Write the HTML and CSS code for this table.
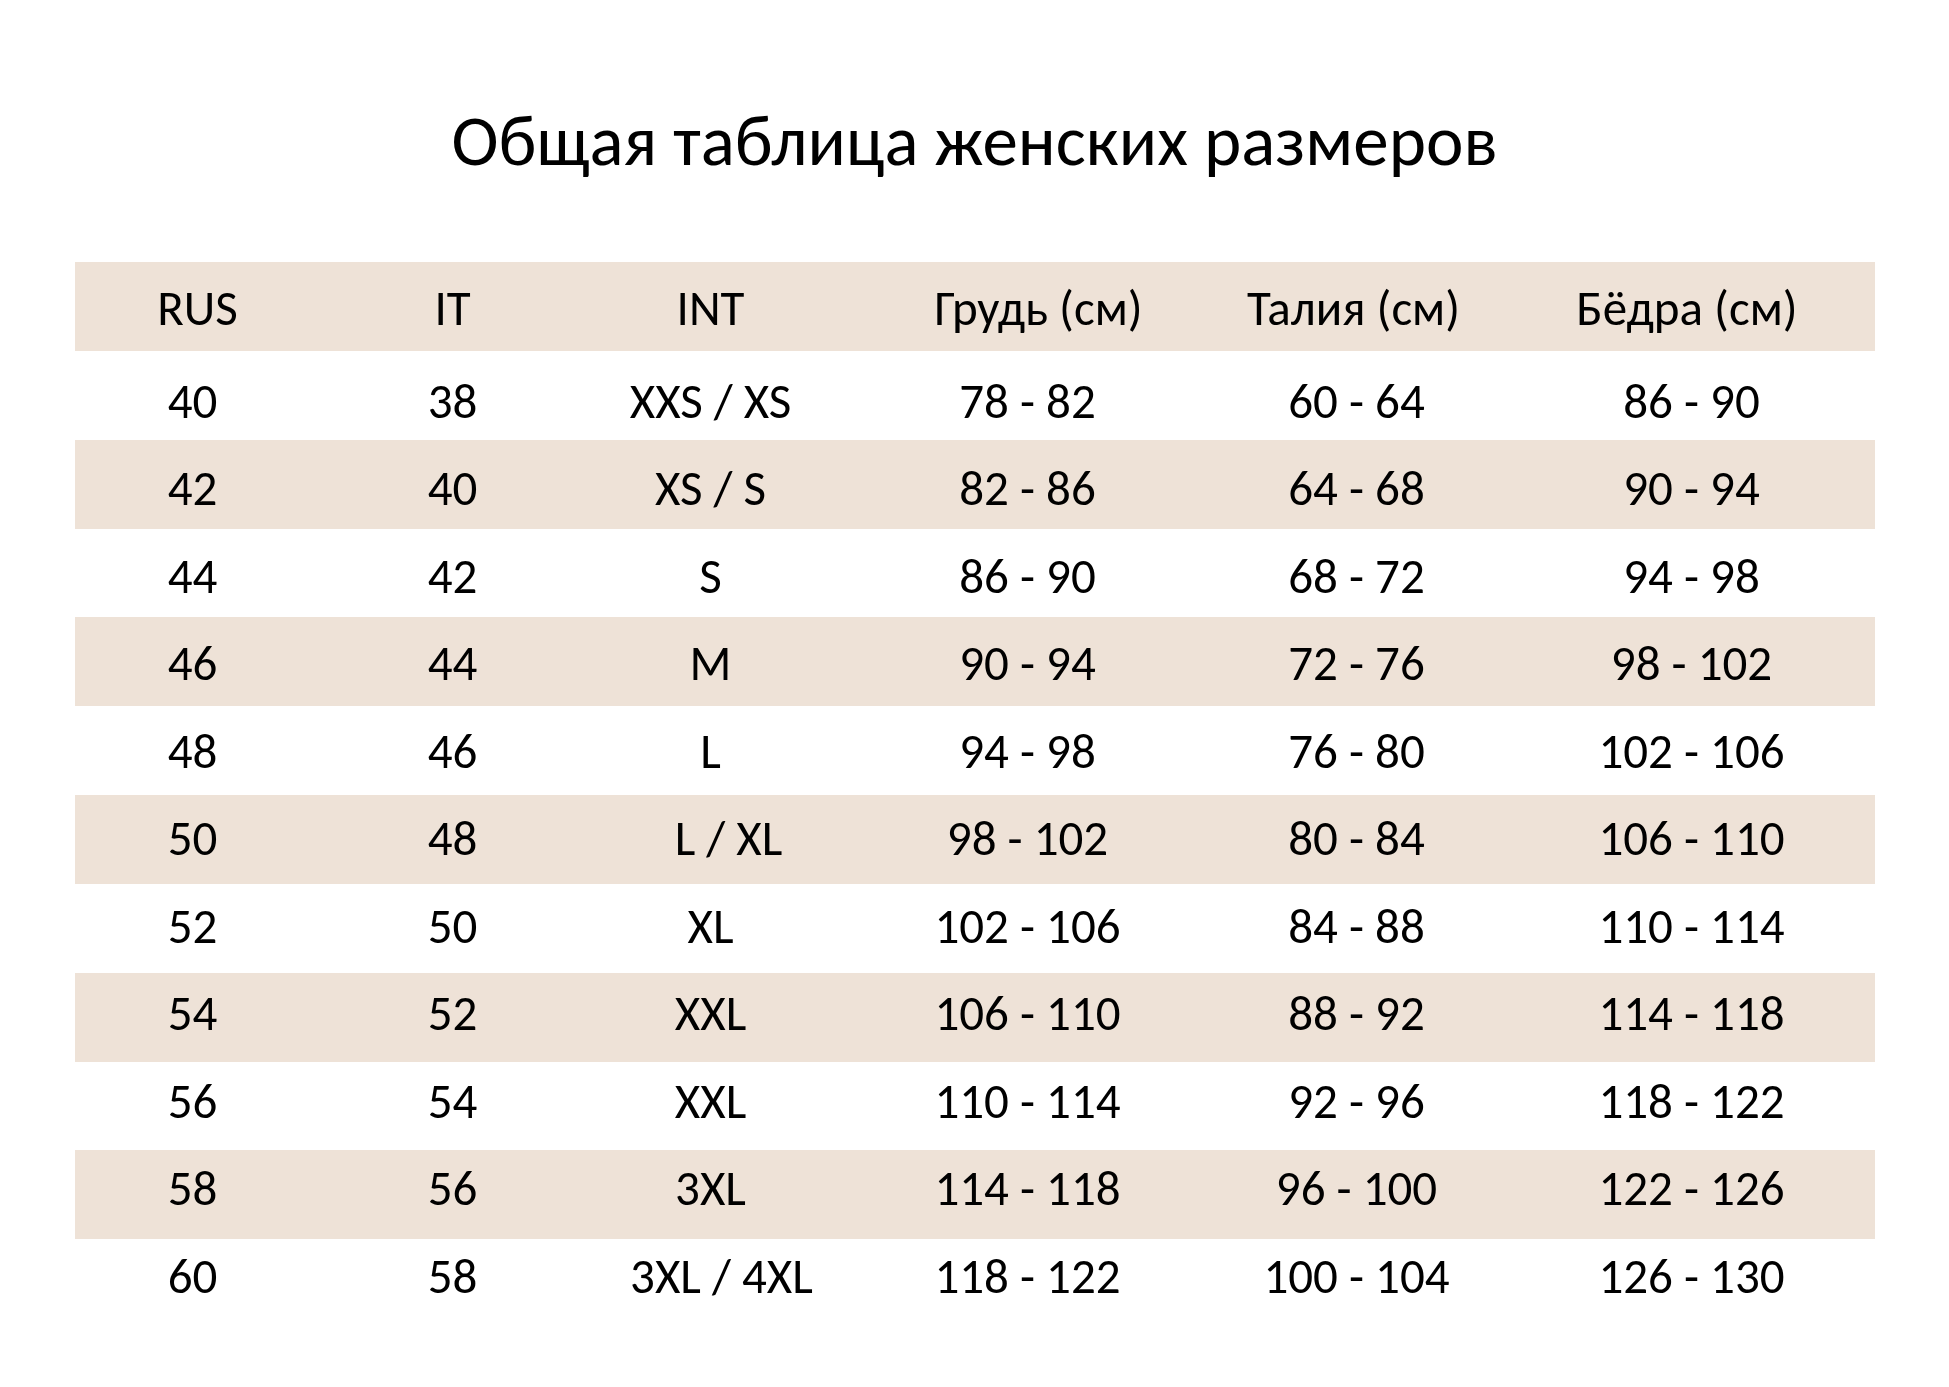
FILE: index.html
```html
<!DOCTYPE html>
<html lang="ru">
<head>
<meta charset="utf-8">
<title>Общая таблица женских размеров</title>
<link rel="stylesheet" href="styles.css">
</head>
<body>
<main class="page">
  <header class="head">
    <h1 class="title">Общая таблица женских размеров</h1>
  </header>
  <section class="table">
    <div class="row row-head">
      <div class="cell c1">RUS</div>
      <div class="cell c2">IT</div>
      <div class="cell c3">INT</div>
      <div class="cell c4">Грудь (см)</div>
      <div class="cell c5">Талия (см)</div>
      <div class="cell c6">Бёдра (см)</div>
    </div>
    <div class="row"><div class="cell c1">40</div><div class="cell c2">38</div><div class="cell c3">XXS / XS</div><div class="cell c4">78 - 82</div><div class="cell c5">60 - 64</div><div class="cell c6">86 - 90</div></div>
    <div class="row"><div class="cell c1">42</div><div class="cell c2">40</div><div class="cell c3">XS / S</div><div class="cell c4">82 - 86</div><div class="cell c5">64 - 68</div><div class="cell c6">90 - 94</div></div>
    <div class="row"><div class="cell c1">44</div><div class="cell c2">42</div><div class="cell c3">S</div><div class="cell c4">86 - 90</div><div class="cell c5">68 - 72</div><div class="cell c6">94 - 98</div></div>
    <div class="row"><div class="cell c1">46</div><div class="cell c2">44</div><div class="cell c3">M</div><div class="cell c4">90 - 94</div><div class="cell c5">72 - 76</div><div class="cell c6">98 - 102</div></div>
    <div class="row"><div class="cell c1">48</div><div class="cell c2">46</div><div class="cell c3">L</div><div class="cell c4">94 - 98</div><div class="cell c5">76 - 80</div><div class="cell c6">102 - 106</div></div>
    <div class="row"><div class="cell c1">50</div><div class="cell c2">48</div><div class="cell c3 shift-lg">L / XL</div><div class="cell c4">98 - 102</div><div class="cell c5">80 - 84</div><div class="cell c6">106 - 110</div></div>
    <div class="row"><div class="cell c1">52</div><div class="cell c2">50</div><div class="cell c3">XL</div><div class="cell c4">102 - 106</div><div class="cell c5">84 - 88</div><div class="cell c6">110 - 114</div></div>
    <div class="row"><div class="cell c1">54</div><div class="cell c2">52</div><div class="cell c3">XXL</div><div class="cell c4">106 - 110</div><div class="cell c5">88 - 92</div><div class="cell c6">114 - 118</div></div>
    <div class="row"><div class="cell c1">56</div><div class="cell c2">54</div><div class="cell c3">XXL</div><div class="cell c4">110 - 114</div><div class="cell c5">92 - 96</div><div class="cell c6">118 - 122</div></div>
    <div class="row"><div class="cell c1">58</div><div class="cell c2">56</div><div class="cell c3">3XL</div><div class="cell c4">114 - 118</div><div class="cell c5">96 - 100</div><div class="cell c6">122 - 126</div></div>
    <div class="row"><div class="cell c1">60</div><div class="cell c2">58</div><div class="cell c3 shift-sm">3XL / 4XL</div><div class="cell c4">118 - 122</div><div class="cell c5">100 - 104</div><div class="cell c6">126 - 130</div></div>
  </section>
</main>
</body>
</html>
```
FILE: styles.css
```css
html, body {
  margin: 0;
  padding: 0;
  background: #ffffff;
}

body {
  font-family: Carlito, "Roboto", "Noto Sans", sans-serif;
  color: #000000;
}

.page {
  width: 1949px;
  height: 1387px;
  overflow: hidden;
}

.head {
  height: 262px;
  display: flex;
  flex-direction: column;
  align-items: center;
  box-sizing: border-box;
  padding-top: 105px;
}

.title {
  margin: 0;
  font-size: 71px;
  font-weight: normal;
  line-height: 72px;
  white-space: nowrap;
}

/* banded table: shaded stripes every other row, starting with the header */
.table {
  width: 1800px;
  height: 1066.2px;
  margin: 0 auto;
  background: repeating-linear-gradient(
    180deg,
    #eee2d7 0,
    #eee2d7 88.85px,
    #ffffff 88.85px,
    #ffffff 177.7px
  );
}

.row {
  display: grid;
  grid-template-columns: 236px 284px 232px 402px 256px 390px;
  height: 87.5px;
  box-sizing: border-box;
  padding-top: 27px;
}

.row-head {
  padding-top: 22px;
}

.cell {
  font-size: 49px;
  line-height: 49px;
  text-align: center;
  white-space: pre;
}

.c6 {
  padding-left: 24px;
}

.row-head .c1 {
  padding-left: 10px;
}

.row-head .c4 {
  padding-left: 22px;
}

.row-head .c5 {
  padding-right: 6px;
}

.row-head .c6 {
  padding-left: 15px;
}

.shift-lg {
  padding-left: 36px;
}

.shift-sm {
  padding-left: 22px;
}
```
